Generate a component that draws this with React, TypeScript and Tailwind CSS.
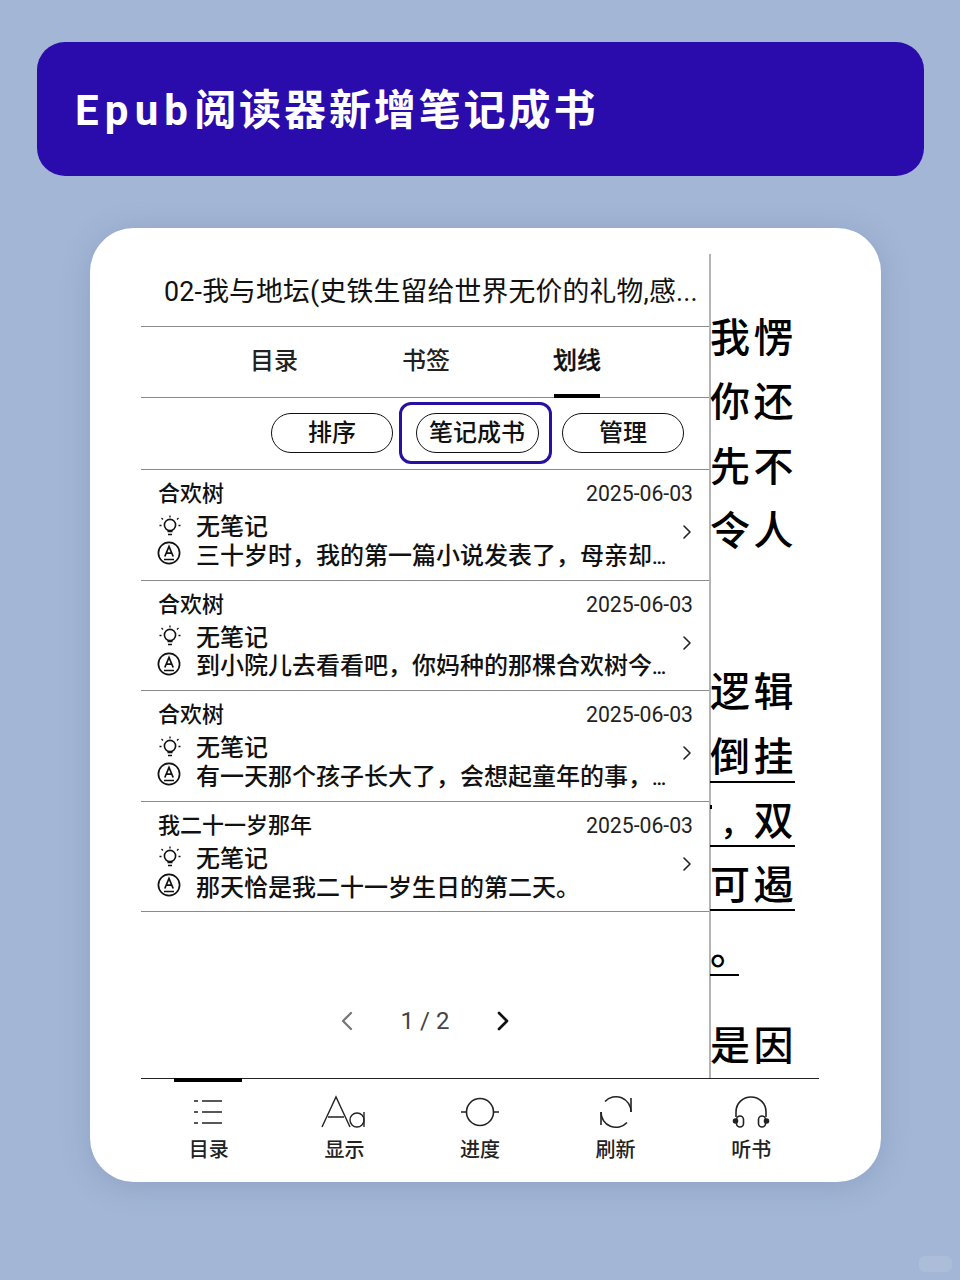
import { ChevronLeft, ChevronRight } from 'lucide-react';

const cjk = 'font-["Roboto","Noto_Sans_CJK_SC",sans-serif]';

const notes = [
  { title: '合欢树', text: '三十岁时，我的第一篇小说发表了，母亲却' },
  { title: '合欢树', text: '到小院儿去看看吧，你妈种的那棵合欢树今' },
  { title: '合欢树', text: '有一天那个孩子长大了，会想起童年的事，' },
  { title: '我二十一岁那年', text: '那天恰是我二十一岁生日的第二天。', full: true },
];

const readerLines = [
  { text: '我愣', row: '', inner: '' },
  { text: '你还', row: '', inner: '' },
  { text: '先不', row: '', inner: '' },
  { text: '令人', row: '', inner: '' },
  { text: '逻辑', row: 'mt-[97px]', inner: '' },
  { text: '倒挂', row: '', inner: 'border-b-2 border-black' },
  { text: '，双', row: 'relative', inner: 'border-b-2 border-black' },
  { text: '可遏', row: '', inner: 'border-b-2 border-black' },
  { text: '。', row: '', inner: 'border-b-2 border-black w-[29px]' },
  { text: '是因', row: 'mt-[32px]', inner: '' },
];

function BulbIcon() {
  return (
    <svg width="24" height="24" viewBox="0 0 24 24" fill="none" stroke="#111" strokeWidth="1.6">
      <circle cx="12" cy="11" r="5.6" />
      <path d="M9.5 17.5h5M10 20.5h4" />
      <path d="M12 1.500v2M3.500 4l1.500 1.500M20.500 4L19 5.500M1.500 11.500h2M20.500 11.500h2" strokeWidth="1.3" />
    </svg>
  );
}

function AIcon() {
  return (
    <svg width="24" height="24" viewBox="0 0 24 24" fill="none" stroke="#111" strokeWidth="1.7">
      <circle cx="12" cy="12" r="10.6" />
      <path d="M7.800 15.500L12 5.500l4.200 10M9.200 12.200h5.600M7 18.500h10" />
    </svg>
  );
}

function NoteRow({ title, text, full }: { title: string; text: string; full?: boolean }) {
  return (
    <div className="h-[110.6px] border-b-[1.5px] border-[#8a8a8a] pl-[17px] pr-[16px] pt-[10px]">
      <div className="flex h-[28px] items-center justify-between">
        <span className="text-[22px] font-medium leading-[28px] text-[#111]">{title}</span>
        <span className="text-[21.2px] leading-[28px] text-[#222]">2025-06-03</span>
      </div>
      <div className="flex items-center justify-between pt-[4px]">
        <div className="flex flex-col">
          <div className="flex h-[31px] items-center">
            <span className="-mt-[4px]">
              <BulbIcon />
            </span>
            <span className="ml-[14px] text-[24px] font-medium leading-[31px] text-[#111]">无笔记</span>
          </div>
          <div className="-mt-[2px] flex h-[31px] items-center">
            <span className="-mt-[7px] -ml-[1px] mr-[1px]">
              <AIcon />
            </span>
            <span className="ml-[14px] whitespace-nowrap text-[24px] font-medium leading-[31px] text-[#111]">
              {text}
              {!full && <span className="text-[20px]">…</span>}
            </span>
          </div>
        </div>
        <ChevronRight className="-mr-[6px] mb-[20px] h-[24px] w-[24px] text-[#222]" strokeWidth={1.6} />
      </div>
    </div>
  );
}

function Pill({ label, className = '' }: { label: string; className?: string }) {
  return (
    <div className={`flex h-[40px] w-[122px] items-center justify-center rounded-full border-[1.5px] border-[#111] pt-[1px] text-[24px] font-medium text-[#111] ${className}`}>
      {label}
    </div>
  );
}

function TabIcon({ name }: { name: string }) {
  if (name === 'toc') {
    return (
      <svg width="40" height="34" viewBox="0 0 40 34" fill="none" stroke="#222" strokeWidth="1.5">
        <path d="M4 6h4M4 17h4M4 28h4M12 6h20M12 17h20M12 28h20" transform="translate(1 0)" />
      </svg>
    );
  }
  if (name === 'font') {
    return (
      <svg width="46" height="34" viewBox="0 0 46 34" fill="none" stroke="#222" strokeWidth="1.4">
        <path d="M1 32L15 2l14 30M7 22h16" />
        <circle cx="36" cy="25" r="7" />
        <path d="M43 17v15" />
      </svg>
    );
  }
  if (name === 'progress') {
    return (
      <svg width="40" height="34" viewBox="0 0 40 34" fill="none" stroke="#222" strokeWidth="1.6">
        <circle cx="20" cy="17" r="13.500" />
        <path d="M1 17h5.500M33.500 17H39" />
      </svg>
    );
  }
  if (name === 'refresh') {
    return (
      <svg width="40" height="34" viewBox="0 0 40 34" fill="none" stroke="#222" strokeWidth="1.6">
        <path d="M9 6.500A15 15 0 0 1 35 17" />
        <path d="M35 3v14" />
        <path d="M31 27.500A15 15 0 0 1 5 17" />
        <path d="M5 17v13" />
      </svg>
    );
  }
  return (
    <svg width="40" height="34" viewBox="0 0 40 34" fill="none" stroke="#222" strokeWidth="1.6">
      <path d="M5 22V17C5 8 12 2 20 2C28 2 35 8 35 17V22" />
      <rect x="5.500" y="21" width="7" height="11" rx="3.500" />
      <rect x="27.500" y="21" width="7" height="11" rx="3.500" />
      <circle cx="4.500" cy="26" r="2" fill="#222" />
      <circle cx="35.500" cy="26" r="2" fill="#222" />
    </svg>
  );
}

export default function App() {
  const tabs = [
    { icon: 'toc', label: '目录' },
    { icon: 'font', label: '显示' },
    { icon: 'progress', label: '进度' },
    { icon: 'refresh', label: '刷新' },
    { icon: 'headphones', label: '听书' },
  ];

  return (
    <div className={`relative h-[1280px] w-[960px] overflow-hidden bg-[#a3b6d6] pl-[37px] pt-[42px] ${cjk}`}>
      {/* Banner */}
      <div className="flex h-[134px] w-[887px] items-center rounded-[28px] bg-[#2a0bab] pl-[38px] pt-[3px]">
        <h1 className="whitespace-nowrap text-[42px] font-bold tracking-[2.9px] text-white">
          <span className="tracking-[6.2px]">Epub</span>阅读器新增笔记成书
        </h1>
      </div>

      {/* Device card */}
      <div className="ml-[53px] mt-[52px] h-[954px] w-[791px] rounded-[44px] bg-white pl-[51px] pt-[26px] shadow-[0_4px_30px_rgba(70,90,130,0.22)]">
        <div className="flex h-[823.500px] w-[678px] overflow-hidden">
          {/* Notes panel */}
          <div className="flex w-[570px] shrink-0 flex-col border-r-2 border-[#b4b4b4]">
            <div className="flex h-[73px] items-center border-b-[1.5px] border-[#8a8a8a] pl-[23px] pt-[4px]">
              <span className="whitespace-nowrap text-[26.8px] tracking-[0.2px] text-[#111]">
                02-我与地坛(史铁生留给世界无价的礼物,感...
              </span>
            </div>

            <div className="flex h-[71px] border-b-[1.5px] border-[#8a8a8a] pl-[109px]">
              <div className="flex h-full w-[48px] items-start justify-center pt-[18px] text-[24px] font-medium leading-[32px] text-[#222]">目录</div>
              <div className="ml-[104px] flex h-full w-[48px] items-start justify-center pt-[18px] text-[24px] font-medium leading-[32px] text-[#222]">书签</div>
              <div className="ml-[103px] flex h-full w-[48px] flex-col items-center justify-between pt-[18px] text-[24px] leading-[32px] text-[#111]">
                <span className="font-medium [-webkit-text-stroke:0.3px_black]">划线</span>
                <span className="-mb-[1px] h-[4px] w-[46px] bg-black" />
              </div>
            </div>

            <div className="flex h-[72px] items-center border-b-[1.5px] border-[#8a8a8a] pb-[2px] pl-[130px]">
              <Pill label="排序" />
              <div className="ml-[6px] flex h-[62px] w-[153px] items-center justify-center rounded-[12px] border-[3px] border-[#2a10a0] pl-[3px]">
                <Pill label="笔记成书" className="w-[123px]" />
              </div>
              <Pill label="管理" className="ml-[10px]" />
            </div>

            {notes.map((n, i) => (
              <NoteRow key={i} title={n.title} text={n.text} full={n.full} />
            ))}

            <div className="flex flex-1 items-start justify-center pt-[93px]">
              <ChevronLeft className="h-[32px] w-[32px] text-[#777]" strokeWidth={1.7} />
              <span className="mx-[38px] text-[24px] leading-[32px] text-[#444]">1 / 2</span>
              <ChevronRight className="h-[32px] w-[32px] text-[#111]" strokeWidth={2} />
            </div>
          </div>

          {/* Reader page behind the panel */}
          <div className="-ml-px flex w-[85px] shrink-0 flex-col pt-[51px]">
            {readerLines.map((line, i) => (
              <div key={i} className={`h-[64.6px] pt-[11px] ${line.row}`}>
                <div className={`box-border h-[48px] whitespace-nowrap text-[40px] font-medium leading-[46px] tracking-[3.500px] text-black ${line.inner}`}>
                  {line.text.startsWith('，') ? (
                    <>
                      <span className="inline-block w-[43.500px] pl-[10px] text-[33px] tracking-normal">，</span>双
                    </>
                  ) : (
                    line.text
                  )}
                </div>
                {line.text.startsWith('，') && <span className="absolute left-0 top-[17px] h-[4px] w-[2px] bg-black" />}
              </div>
            ))}
          </div>
        </div>

        {/* Bottom toolbar */}
        <div className="relative flex h-[90px] w-[678px] border-t-[1.5px] border-[#222]">
          <span className="absolute -top-[0.500px] left-[33px] h-[4px] w-[68px] bg-black" />
          {tabs.map((tab) => (
            <div key={tab.label} className="flex flex-1 flex-col items-center pt-[16px]">
              <TabIcon name={tab.icon} />
              <span className="mt-[6px] text-[20px] font-medium leading-[30px] text-[#222]">{tab.label}</span>
            </div>
          ))}
        </div>
      </div>

      {/* Faint watermark */}
      <div className="absolute left-[919px] top-[1256px] h-[16px] w-[33px] rounded-[6px] bg-white/10" />
    </div>
  );
}
